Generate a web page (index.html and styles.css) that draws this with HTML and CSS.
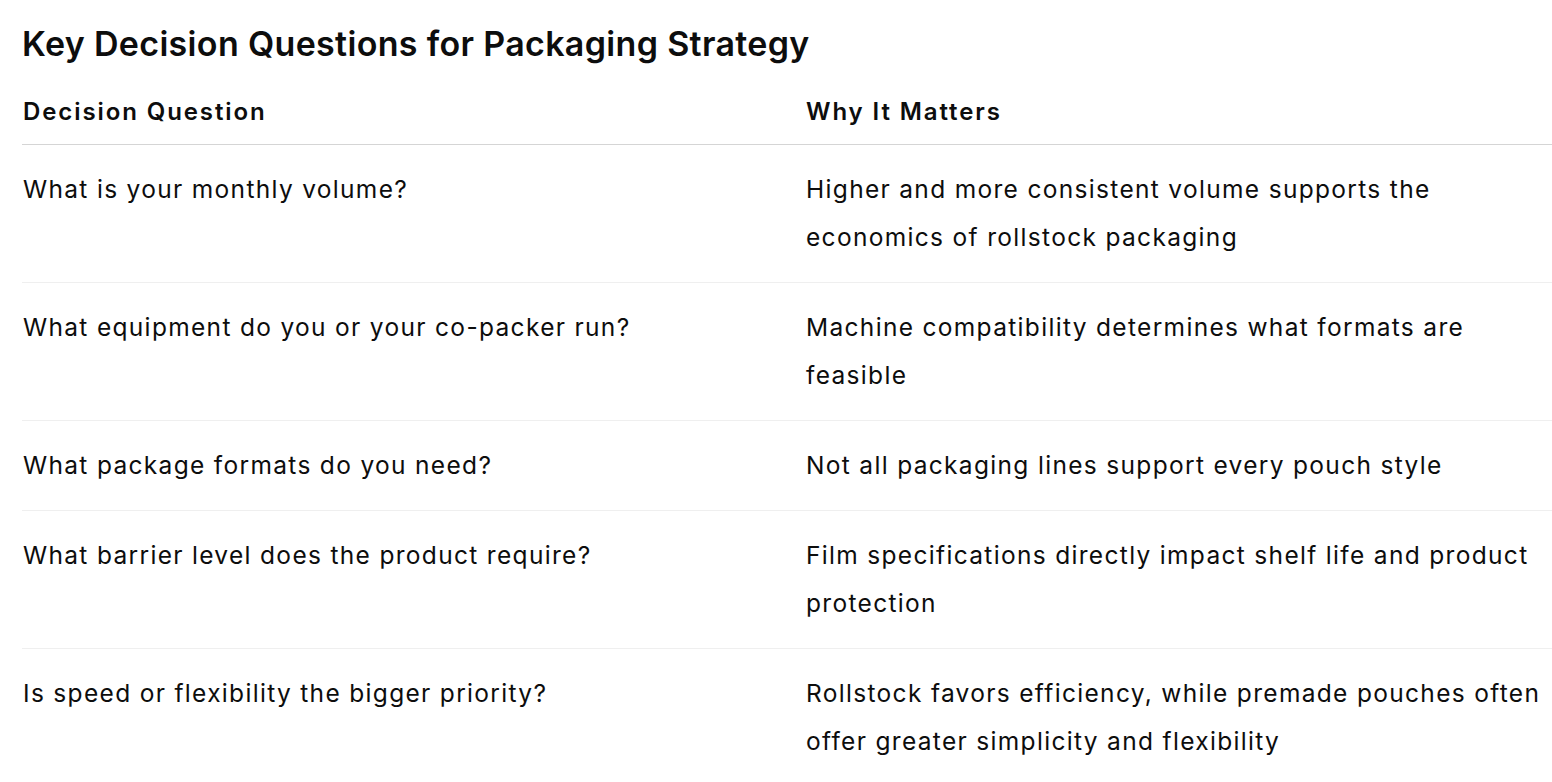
FILE: index.html
```html
<!DOCTYPE html>
<html lang="en">
<head>
<meta charset="utf-8">
<title>Key Decision Questions for Packaging Strategy</title>
<link rel="stylesheet" href="styles.css">
</head>
<body>
<main class="page">
  <h2 class="title">Key Decision Questions for Packaging Strategy</h2>
  <table class="dq-table">
    <thead>
      <tr>
        <th class="col-q">Decision Question</th>
        <th class="col-w">Why It Matters</th>
      </tr>
    </thead>
    <tbody>
      <tr>
        <td>What is your monthly volume?</td>
        <td>Higher and more consistent volume supports the economics of rollstock packaging</td>
      </tr>
      <tr>
        <td>What equipment do you or your co-packer run?</td>
        <td>Machine compatibility determines what formats are feasible</td>
      </tr>
      <tr>
        <td>What package formats do you need?</td>
        <td>Not all packaging lines support every pouch style</td>
      </tr>
      <tr>
        <td>What barrier level does the product require?</td>
        <td>Film specifications directly impact shelf life and product protection</td>
      </tr>
      <tr>
        <td>Is speed or flexibility the bigger priority?</td>
        <td>Rollstock favors efficiency, while premade pouches often offer greater simplicity and flexibility</td>
      </tr>
    </tbody>
  </table>
</main>
</body>
</html>
```
FILE: styles.css
```css
html, body {
  margin: 0;
  padding: 0;
  background: #ffffff;
}
body {
  font-family: Inter, "Noto Sans", "Liberation Sans", sans-serif;
  color: #0d0d0d;
  overflow: hidden;
}
.page {
  padding: 0 0 0 22px;
}
.title {
  margin: 0;
  padding-top: 24px;
  font-size: 34px;
  line-height: 40px;
  font-weight: 600;
  letter-spacing: 0.33px;
}
.dq-table {
  width: 1530px;
  border-collapse: collapse;
  margin-top: 28px;
  font-size: 24.5px;
  line-height: 48px;
  letter-spacing: 1.32px;
}
.dq-table th {
  text-align: left;
  font-size: 24px;
  font-weight: 600;
  letter-spacing: 1.9px;
  padding: 0 0 12px 1px;
  border-bottom: 1.5px solid #d5d5d5;
  line-height: 40px;
}
.col-q { width: 782px; }
.dq-table td {
  vertical-align: top;
  padding: 20px 0 21px 1px;
  border-bottom: 1px solid #efefef;
}
```
